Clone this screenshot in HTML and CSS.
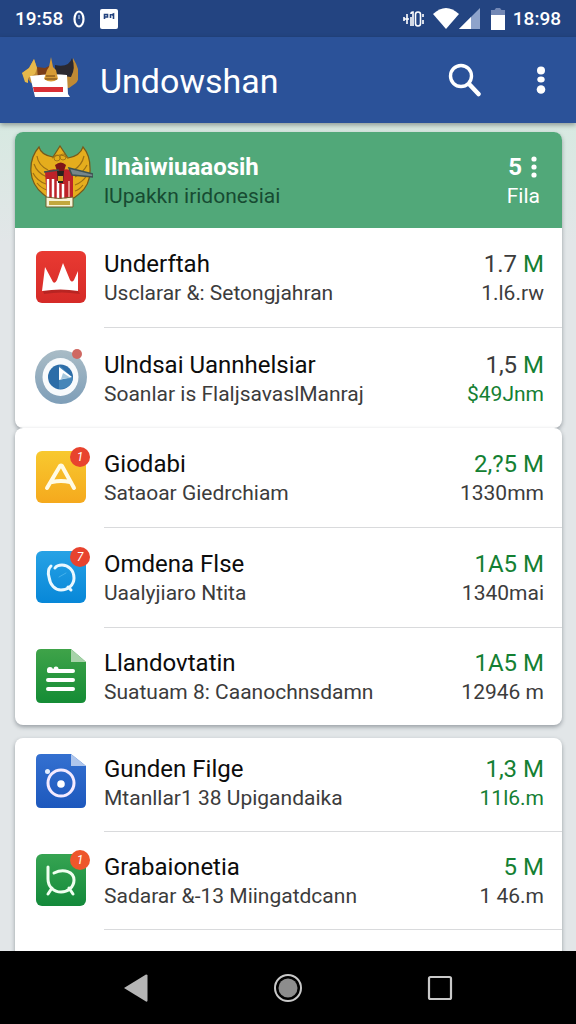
FILE: index.html
```html
<!DOCTYPE html>
<html lang="id">
<head>
    <meta charset="UTF-8">
    <meta name="viewport" content="width=device-width, initial-scale=1.0">
    <title>Undowshan</title>
    <link rel="stylesheet" href="styles.css">
</head>
<body>
    <!-- Status bar -->
    <div class="status-bar">
        <span>19:58</span>
        <svg class="status-dot" width="14" height="20" viewBox="0 0 14 20" fill="none" stroke="#fff" stroke-width="2.200">
            <ellipse cx="7" cy="10" rx="4.500" ry="7.500"/>
            <path d="M7 6v4" stroke="#9fb6dd" stroke-width="1.500"/>
        </svg>
        <svg width="18" height="20" viewBox="0 0 18 20">
            <rect width="18" height="20" rx="2" fill="#fff"/>
            <path d="M4.500 10V5.500h3v2.500H5M10.500 5v4M13.500 10V5l-2 1" fill="none" stroke="#24437e" stroke-width="1.600"/>
        </svg>
        <div class="status-right">
            <svg width="22" height="20" viewBox="0 0 22 20" fill="none" stroke="#fff" stroke-width="1.600">
                <path d="M1 8v4M4 5v10M1 10h5M8 8v9M8 5q0-2 2-2v14"/>
                <rect x="12.500" y="3" width="5" height="14" rx="2.500"/>
                <path d="M20 5v3M20 11v4"/>
            </svg>
            <svg class="wifi" width="26" height="21" viewBox="0 0 26 21" fill="#fff">
                <path d="M0 6Q13-6 26 6L13 21z"/>
            </svg>
            <svg width="21" height="21" viewBox="0 0 21 21">
                <path d="M0 21L21 0v21z" fill="#8ea3cb"/>
                <path d="M0 21L12 9v12z" fill="#fff"/>
            </svg>
            <svg class="battery" width="14" height="22" viewBox="0 0 14 22">
                <path d="M0 2h3.500L5 0h4l1.500 2H14v6H0z" fill="#7388b5"/>
                <path d="M0 7h14v15H0z" fill="#fff"/>
            </svg>
            <span>18:98</span>
        </div>
    </div>

    <!-- App bar -->
    <header class="app-bar">
        <svg class="app-logo" width="58" height="42" viewBox="0 0 58 42">
            <path d="M2 16l7-5 5-9 3 9 13 1 4 5 6-5q13 2 13-11 10 17 3 25l-7 5-38-5-3-4z" fill="#c08a35"/>
            <path d="M17 10l8 1 6-3 2 10-15 4z" fill="#7b3d18"/>
            <path d="M35 8q14 3 17-7 4 10-1 19l-16-2z" fill="#2b2930"/>
            <path d="M2 16l7-5 5-9 3 9-2 6-7 4v5l-3-1z" fill="#e6b84b"/>
            <path d="M10 19q22-3 37-1l1 19 2 3H15z" fill="#fff"/>
            <path d="M13 30h30v5H14z" fill="#d92f35"/>
            <path d="M31 0l2 10 3 3 2 9q-7 5-14 0l3-9 2-3z" fill="#d79b35"/>
            <path d="M26 19h9M25 22h12" stroke="#6c4215"/>
        </svg>
        <h1>Undowshan</h1>
        <button class="icon-btn" aria-label="Search">
            <svg width="34" height="34" viewBox="0 0 34 34" fill="none" stroke="#fff">
                <circle cx="13" cy="13" r="10.500" stroke-width="3.400"/>
                <path d="M20 20l2 2" stroke-width="3"/>
                <path d="M22 22l8.500 9" stroke-width="4.500" stroke-linecap="round"/>
            </svg>
        </button>
        <button class="icon-btn" aria-label="More options">
            <svg width="10" height="28" viewBox="0 0 10 28" fill="#fff">
                <circle cx="5" cy="4.500" r="4"/>
                <ellipse cx="5" cy="13.500" rx="3.700" ry="3"/>
                <circle cx="5" cy="23.500" r="4.300"/>
            </svg>
        </button>
    </header>

    <main class="content">
        <section class="card">
            <div class="card-header">
                <svg class="emblem" width="64" height="64" viewBox="0 0 64 64">
                    <path d="M10 2q-9 10-8 25 1 13 12 22l5 4h26l5-4q12-9 11-26Q61 10 54 2q-3 9-15 11L31 1l-7 11Q12 10 10 2z" fill="#e5ad1d" stroke="#77591a" stroke-width="1.200"/>
                    <path d="M8 11q1 9 11 14M5 19q3 9 13 13M4 28q4 8 13 11M8 38q4 5 10 7M55 11q-2 9-10 14M58 20q-4 8-12 12M58 30q-4 7-12 10M54 40q-4 5-8 6M23 13q8-6 16 0" fill="none" stroke="#9d7015" stroke-width="1.200"/>
                    <circle cx="28" cy="13" r="3" fill="none" stroke="#a27616"/>
                    <circle cx="34" cy="12" r="3" fill="none" stroke="#a27616"/>
                    <path d="M16 27q8-5 15-1 8-4 13 1v27H18z" fill="#bd2229"/>
                    <path d="M19 34v19M24 34v20M29 36v18M34 39v15" stroke="#fff" stroke-width="2.500"/>
                    <path d="M40 36v18" stroke="#e78d86" stroke-width="2"/>
                    <path d="M26 20q6-5 11 0l-2 6h-7z" fill="#7e1519"/>
                    <path d="M28 26h7l-1 12h-5z" fill="#28231d"/>
                    <path d="M29 31h5v5h-5z" fill="#d7a51f"/>
                    <path d="M15 27l15-2M40 23l24 6v3l-21-2z" fill="#76868a" stroke="#3d5150" stroke-width="1.500"/>
                    <path d="M17 52q13 3 27 0v10H17z" fill="#f8f3d5" stroke="#6e612d"/>
                    <path d="M20 56h21v4H20z" fill="#c3a73d"/>
                </svg>
                <div class="info">
                    <h2>Ilnàiwiuaaosih</h2>
                    <p>lUpakkn iridonesiai</p>
                </div>
                <div class="header-count">
                    <button class="card-menu" aria-label="Card options">5
                        <svg width="8" height="22" viewBox="0 0 8 22" fill="#fff">
                            <circle cx="4" cy="3" r="2.600"/>
                            <circle cx="4" cy="11" r="2.600"/>
                            <circle cx="4" cy="19" r="2.600"/>
                        </svg>
                    </button>
                    <span>Fila</span>
                </div>
            </div>
            <ul class="list">
                <li class="row">
                    <div class="icon red">
                        <svg width="50" height="52" viewBox="0 0 50 52">
                            <path d="M7 40q18-5 35 0l2 3q-18-3-36 0z" fill="#981c1c" opacity=".5"/>
                            <path d="M6 40L9 16l8 15q2 2 4-2l6-17 7 17q2 3 4 0l4-9v20q-17-3-36 0z" fill="#fff"/>
                        </svg>
                    </div>
                    <div class="row-body">
                        <div class="info">
                            <h3>Underftah</h3>
                            <p>Usclarar &amp;: Setongjahran</p>
                        </div>
                        <div class="amount">
                            <strong>1.7 <em>M</em></strong>
                            <span>1.l6.rw</span>
                        </div>
                    </div>
                </li>
                <li class="row">
                    <div class="icon">
                        <svg width="52" height="56" viewBox="0 0 52 56">
                            <defs>
                                <linearGradient id="ring" x1="0" y1="0" x2="0" y2="1">
                                    <stop offset="0" stop-color="#a9bcc6"/>
                                    <stop offset="1" stop-color="#7e9eb8"/>
                                </linearGradient>
                            </defs>
                            <ellipse cx="26" cy="28" rx="26" ry="27" fill="url(#ring)"/>
                            <ellipse cx="25.500" cy="28" rx="18" ry="19" fill="#f7fafc"/>
                            <circle cx="25.500" cy="28" r="12.500" fill="#2c6da8"/>
                            <path d="M24 16v24q12 0 14-11z" fill="#4586b9"/>
                            <path d="M24 18l13 10-13 3z" fill="#fff"/>
                            <path d="M28 24l8 5-10 1z" fill="#a8c9de"/>
                            <circle cx="42" cy="5" r="5" fill="#cf6862"/>
                        </svg>
                    </div>
                    <div class="row-body">
                        <div class="info">
                            <h3>Ulndsai Uannhelsiar</h3>
                            <p>Soanlar is FlaljsavaslManraj</p>
                        </div>
                        <div class="amount">
                            <strong>1,5 <em>M</em></strong>
                            <span class="green">$49Jnm</span>
                        </div>
                    </div>
                </li>
            </ul>
        </section>

        <section class="card">
            <ul class="list">
                <li class="row">
                    <div class="icon yellow">
                        <svg width="50" height="52" viewBox="0 0 50 52" fill="none" stroke="#fffbe5" stroke-width="4" stroke-linecap="round" stroke-linejoin="round">
                            <path d="M11 37L24 15q1-1 2 0l12 22M16 31q9-2 18 0" />
                        </svg>
                        <span class="badge">1</span>
                    </div>
                    <div class="row-body">
                        <div class="info">
                            <h3>Giodabi</h3>
                            <p>Sataoar Giedrchiam</p>
                        </div>
                        <div class="amount">
                            <strong class="green">2,?5 M</strong>
                            <span>1330mm</span>
                        </div>
                    </div>
                </li>
                <li class="row">
                    <div class="icon sky">
                        <svg width="50" height="52" viewBox="0 0 50 52" fill="none" stroke="#eaf8ff" stroke-width="3" stroke-linecap="round">
                            <path d="M15 15q-4 4-2 11c1 8 6 13 12 13 7 0 13-5 13-12 0-8-6-13-12-13q-5 0-7 3M32 36l3 3"/>
                            <path d="M23 26l7-4" stroke="#43b1eb" stroke-width="1"/>
                        </svg>
                        <span class="badge">7</span>
                    </div>
                    <div class="row-body">
                        <div class="info">
                            <h3>Omdena Flse</h3>
                            <p>Uaalyjiaro Ntita</p>
                        </div>
                        <div class="amount">
                            <strong class="green">1A5 M</strong>
                            <span>1340mai</span>
                        </div>
                    </div>
                </li>
                <li class="row">
                    <div class="icon">
                        <svg width="50" height="54" viewBox="0 0 50 54">
                            <defs>
                                <linearGradient id="sheet" x1="0" y1="0" x2="0" y2="1">
                                    <stop offset="0" stop-color="#3fa349"/>
                                    <stop offset="1" stop-color="#148c35"/>
                                </linearGradient>
                            </defs>
                            <path d="M5 0h30l15 13v36q0 5-5 5H5q-5 0-5-5V5q0-5 5-5z" fill="url(#sheet)"/>
                            <path d="M35 0l15 13H35z" fill="#a7d3a9"/>
                            <path d="M13 22h24M12 31h25M12 40h25" stroke="#fff" stroke-width="4" stroke-linecap="round" fill="none"/>
                            <circle cx="14" cy="21" r="3" fill="#fff"/>
                            <circle cx="20" cy="20" r="2.500" fill="#fff"/>
                        </svg>
                    </div>
                    <div class="row-body">
                        <div class="info">
                            <h3>Llandovtatin</h3>
                            <p>Suatuam 8: Caanochnsdamn</p>
                        </div>
                        <div class="amount">
                            <strong class="green">1A5 M</strong>
                            <span>12946 m</span>
                        </div>
                    </div>
                </li>
            </ul>
        </section>

        <section class="card card-compact">
            <ul class="list">
                <li class="row">
                    <div class="icon">
                        <svg width="50" height="54" viewBox="0 0 50 54">
                            <defs>
                                <linearGradient id="doc" x1="0" y1="0" x2="0" y2="1">
                                    <stop offset="0" stop-color="#3470d0"/>
                                    <stop offset="1" stop-color="#1d58bd"/>
                                </linearGradient>
                            </defs>
                            <path d="M5 0h30l15 12v37q0 5-5 5H5q-5 0-5-5V5q0-5 5-5z" fill="url(#doc)"/>
                            <path d="M35 0l15 12H35z" fill="#afc6ec"/>
                            <circle cx="25" cy="29" r="13" fill="none" stroke="#f4eaff" stroke-width="3"/>
                            <circle cx="25" cy="30" r="3.800" fill="#fff"/>
                            <circle cx="11.500" cy="17.500" r="2.500" fill="#e4efff"/>
                        </svg>
                    </div>
                    <div class="row-body">
                        <div class="info">
                            <h3>Gunden Filge</h3>
                            <p>Mtanllar1 38 Upigandaika</p>
                        </div>
                        <div class="amount">
                            <strong class="green">1,3 M</strong>
                            <span class="green">11l6.m</span>
                        </div>
                    </div>
                </li>
                <li class="row">
                    <div class="icon green-bg">
                        <svg width="50" height="52" viewBox="0 0 50 52" fill="none" stroke="#effff0" stroke-width="3" stroke-linecap="round">
                            <path d="M12 13v12c0 8 6 13 13 13s13-5 13-12c0-8-10-12-20-7M16 34l-4 6M33 34l4 6"/>
                        </svg>
                        <span class="badge orange">1</span>
                    </div>
                    <div class="row-body">
                        <div class="info">
                            <h3>Grabaionetia</h3>
                            <p>Sadarar &amp;-13 Miingatdcann</p>
                        </div>
                        <div class="amount">
                            <strong class="green">5 M</strong>
                            <span>1 46.m</span>
                        </div>
                    </div>
                </li>
                <li class="row"></li>
            </ul>
        </section>
    </main>

    <!-- System navigation -->
    <nav class="nav-bar">
        <button class="icon-btn" aria-label="Back">
            <svg width="28" height="28" viewBox="0 0 28 28">
                <path d="M2 14L24 .5q1.500 0 1.500 1v25q0 1.500-1.500 1z" fill="#b5b5b5"/>
            </svg>
        </button>
        <button class="icon-btn" aria-label="Home">
            <svg width="28" height="28" viewBox="0 0 28 28">
                <circle cx="14" cy="14" r="13" fill="#000" stroke="#c8c8c8" stroke-width="2"/>
                <circle cx="14" cy="14" r="9.500" fill="#8d8d8d"/>
            </svg>
        </button>
        <button class="icon-btn" aria-label="Recent apps">
            <svg width="28" height="28" viewBox="0 0 28 28">
                <rect x="3" y="3" width="22" height="22" rx="1.500" fill="none" stroke="#c9c9c9" stroke-width="2.200"/>
            </svg>
        </button>
    </nav>
</body>
</html>
```

FILE: styles.css
```css
:root {
    --primary: #2b5299;
    --primary-dark: #234481;
    --green: #148033;
    --text: #0c0c0c;
    --text-soft: #3c3c3c;
    --line: #d9dadc;
}

* {
    margin: 0;
    padding: 0;
    box-sizing: border-box;
}

body {
    height: 100vh;
    display: flex;
    flex-direction: column;
    overflow: hidden;
    background: #e2e6e8;
    color: var(--text);
    font-family: Roboto, "Liberation Sans", sans-serif;
}

svg {
    display: block;
    flex-shrink: 0;
}

button {
    background: none;
    border: none;
    color: inherit;
    font: inherit;
    cursor: pointer;
}

/* Status bar */
.status-bar {
    flex-shrink: 0;
    display: flex;
    align-items: center;
    height: 37px;
    padding: 0 15px;
    background: var(--primary-dark);
    color: #fff;
    font-size: 19px;
    font-weight: 500;
}

.status-dot {
    margin: 0 14px 0 9px;
}

.status-right {
    display: flex;
    align-items: center;
    margin-left: auto;
}

.wifi {
    margin-left: 8px;
}

.battery {
    margin: 0 8px 0 11px;
}

/* App bar */
.app-bar {
    flex-shrink: 0;
    display: flex;
    align-items: center;
    height: 86px;
    padding: 0 20px;
    background: var(--primary);
    color: #fff;
    box-shadow: 0 2px 5px rgba(0, 0, 0, 0.35);
    z-index: 1;
}

.app-logo {
    margin: 0 22px 4px 0;
}

.app-bar h1 {
    flex: 1;
    padding-top: 2px;
    font-size: 34px;
    font-weight: 400;
}

.icon-btn {
    padding: 0 10px;
}

.app-bar .icon-btn + .icon-btn {
    margin-left: 34px;
}

/* Cards */
.content {
    flex: 1;
    min-height: 0;
    overflow: hidden;
    padding: 9px 14px 0 15px;
    background: linear-gradient(#d7e9e1, #e2e6e8 120px);
}

.card {
    background: #fff;
    border-radius: 8px;
    box-shadow: 0 2px 4px rgba(40, 50, 60, 0.4);
    overflow: hidden;
}

.card-header {
    display: flex;
    align-items: center;
    height: 96px;
    padding: 2px 22px 0 14px;
    background: #51a879;
    color: #fff;
}

.emblem {
    margin: 0 11px 8px 0;
}

.info {
    flex: 1;
    min-width: 0;
    white-space: nowrap;
}

.info h2,
.info h3 {
    font-size: 24px;
    line-height: 29px;
    font-weight: 400;
}

.info h2 {
    font-weight: 700;
}

.info p {
    font-size: 21px;
    line-height: 28px;
    color: var(--text-soft);
}

.card-header .info p {
    color: #174b32;
}

.header-count {
    display: flex;
    flex-direction: column;
    align-items: flex-end;
    font-size: 21px;
    line-height: 28px;
}

.card-menu {
    display: flex;
    align-items: center;
    gap: 8px;
    padding-right: 2px;
    font-size: 24px;
    font-weight: 700;
    line-height: 29px;
}

.list {
    list-style: none;
}

.row {
    display: flex;
    align-items: center;
    height: 100px;
    padding-left: 21px;
}

.row-body {
    flex: 1;
    min-width: 0;
    height: 100%;
    display: flex;
    align-items: center;
    padding: 2px 18px 0 0;
    border-bottom: 1px solid var(--line);
}

.card .row:last-child .row-body {
    border-bottom: none;
}

.card + .card .row:last-child {
    height: 97px;
}

.card-compact {
    margin-top: 13px;
}

.card-compact .row {
    height: 98px;
}

.card-compact .row:first-child {
    height: 94px;
}

.card-compact .row:first-child .row-body {
    padding-bottom: 4px;
}

.card-compact .row:first-child .icon {
    margin-bottom: 8px;
}

.amount {
    text-align: right;
    white-space: nowrap;
}

.amount strong,
.amount span {
    display: block;
    font-weight: 400;
    color: var(--text-soft);
}

.amount strong {
    font-size: 24px;
    line-height: 29px;
}

.amount span {
    font-size: 21px;
    line-height: 28px;
}

.amount em {
    font-style: normal;
    color: var(--green);
}

.amount .green {
    color: var(--green);
}

/* Row icons */
.icon {
    position: relative;
    flex-shrink: 0;
    display: flex;
    justify-content: center;
    width: 50px;
    margin: 0 18px 2px 0;
    border-radius: 6px;
}

.red {
    background: linear-gradient(#e93a32, #d52a27);
}

.yellow {
    background: linear-gradient(#f8c92f, #f5a91d);
}

.sky {
    background: linear-gradient(#27a2e5, #0787d8);
}

.green-bg {
    background: linear-gradient(#36a452, #13893a);
}

.badge {
    position: absolute;
    top: -4px;
    right: -4px;
    width: 20px;
    height: 20px;
    border-radius: 50%;
    background: #e8432e;
    color: #fff;
    font-size: 12px;
    font-style: italic;
    line-height: 20px;
    text-align: center;
}

.badge.orange {
    background: #ee572b;
}

/* Navigation bar */
.nav-bar {
    flex-shrink: 0;
    display: flex;
    align-items: center;
    justify-content: center;
    gap: 104px;
    height: 73px;
    background: #000;
}
```
